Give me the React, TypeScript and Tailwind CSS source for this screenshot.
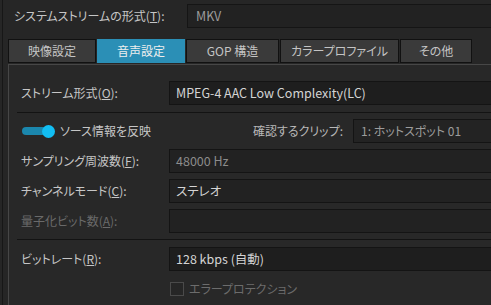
import React from "react";

const font = "font-['Noto_Sans_CJK_JP',sans-serif] [font-feature-settings:'palt']";

function Tab({ label, width, active }: { label: string; width: string; active?: boolean }) {
  return (
    <div
      className={`${width} h-[24px] flex items-center justify-center border text-[12px] ${
        active
          ? "bg-[#2b8fb6] border-[#2b8fb6] text-[#eeeeee]"
          : "bg-[#3a3a3a] border-[#111111] text-[#c4c4c4]"
      }`}
    >
      {label}
    </div>
  );
}

function Field({
  label,
  u,
  value,
  dim,
  disabled,
  box = "bg-[#222222]",
}: {
  label: string;
  u: string;
  value?: string;
  dim?: boolean;
  disabled?: boolean;
  box?: string;
}) {
  return (
    <div className="flex items-center">
      <div
        className={`w-[160px] pl-[12px] text-[12px] ${
          disabled ? "text-[#6a6a6a]" : "text-[#c6c6c6]"
        }`}
      >
        {label}(<span className="underline">{u}</span>):
      </div>
      <div
        className={`flex-1 h-[24px] border border-[#141414] ${box} flex items-center pl-[6px] text-[12.5px] ${
          dim ? "text-[#8c8c8c]" : "text-[#d4d4d4]"
        }`}
      >
        {value}
      </div>
    </div>
  );
}

export default function App() {
  return (
    <div className={`w-[491px] h-[305px] overflow-hidden bg-[#262626] pl-[2px] ${font}`}>
      <div className="w-[600px] h-full border-l border-[#171717] flex flex-col">
        {/* system stream row */}
        <div className="flex items-center pt-[4px]">
          <div className="w-[184px] pl-[11px] text-[12px] text-[#c6c6c6]">
            システムストリームの形式(<span className="underline">T</span>):
          </div>
          <div className="flex-1 h-[24px] border border-[#151515] bg-[#222222] flex items-center pl-[8px] text-[12.5px] text-[#9c9c9c]">
            MKV
          </div>
        </div>

        {/* tabs */}
        <div className="flex gap-[1px] mt-[11px] pl-[5px]">
          <Tab label="映像設定" width="w-[88px]" />
          <Tab label="音声設定" width="w-[88px]" active />
          <Tab label="GOP 構造" width="w-[93px]" />
          <Tab label="カラープロファイル" width="w-[119px]" />
          <Tab label="その他" width="w-[72px]" />
        </div>

        {/* panel */}
        <div className="flex-1 mt-[1px] ml-[5px] border-t border-l border-[#474747] bg-[#282828] flex flex-col">
          <div className="mt-[16px]">
            <Field
              label="ストリーム形式"
              u="O"
              value="MPEG-4 AAC Low Complexity(LC)"
              box="bg-[#1e1e1e]"
            />
          </div>

          <div className="mt-[7px] ml-[8px] h-[1px] bg-[#131313]" />

          <div className="mt-[6px] flex items-center h-[24px]">
            <div className="w-[160px] pl-[13px] flex items-center">
              <div className="relative w-[32px] h-[13px] flex items-center">
                <div className="w-[24px] h-[8px] rounded-full bg-[#1b87ad]" />
                <div className="absolute left-[20px] top-0 w-[13px] h-[13px] rounded-full bg-[#12bef3]" />
              </div>
              <span className="ml-[6px] text-[12px] text-[#c6c6c6]">ソース情報を反映</span>
            </div>
            <div className="w-[184px] text-right pr-[10px] text-[12px] text-[#b8b8b8]">
              確認するクリップ:
            </div>
            <div className="flex-1 h-[24px] border border-[#141414] bg-[#232323] flex items-center pl-[7px] text-[12px] text-[#9c9c9c]">
              1: ホットスポット 01
            </div>
          </div>

          <div className="mt-[6px] flex flex-col gap-[6px]">
            <Field label="サンプリング周波数" u="F" value="48000 Hz" dim />
            <Field label="チャンネルモード" u="C" value="ステレオ" />
            <Field label="量子化ビット数" u="A" disabled />
          </div>

          <div className="mt-[6px] ml-[8px] h-[1px] bg-[#131313]" />

          <div className="mt-[7px]">
            <Field label="ビットレート" u="R" value="128 kbps (自動)" box="bg-[#1e1e1e]" />
          </div>

          <div className="mt-[9px] ml-[161px] flex items-center">
            <div className="w-[14px] h-[14px] border border-[#4a4a4a] bg-[#262626]" />
            <span className="ml-[5px] text-[12px] text-[#6c6c6c]">エラープロテクション</span>
          </div>
        </div>
      </div>
    </div>
  );
}
